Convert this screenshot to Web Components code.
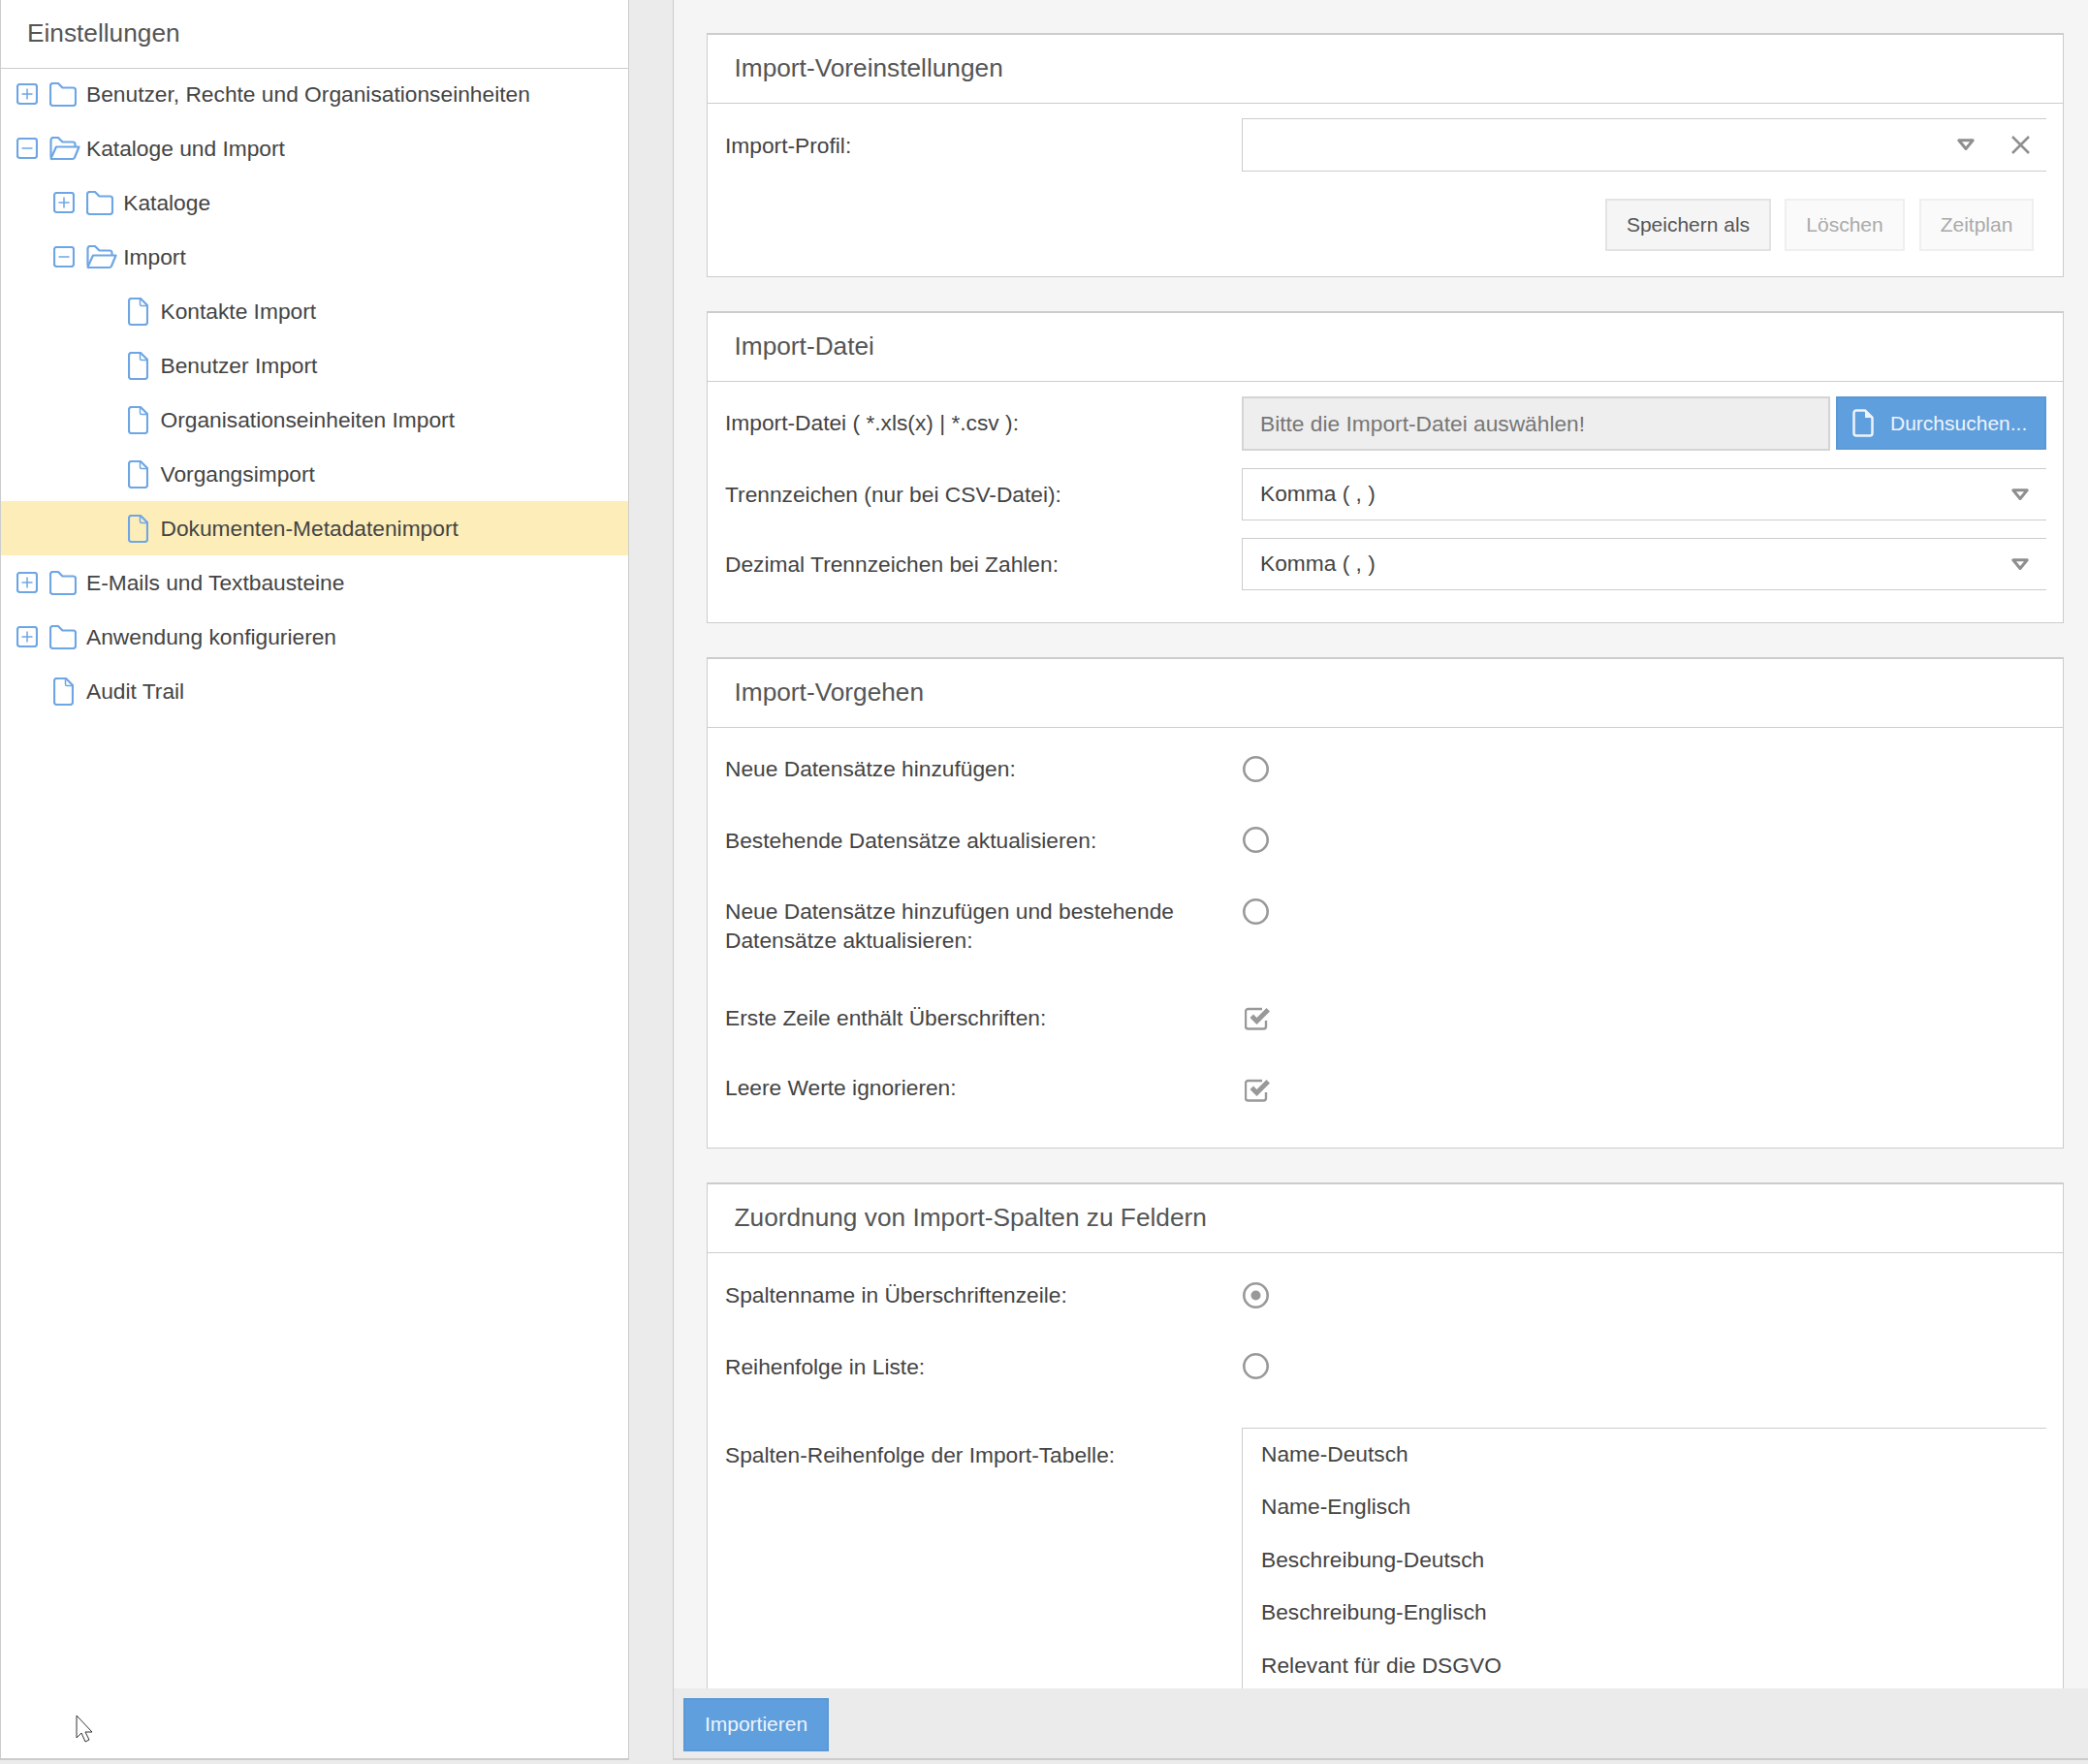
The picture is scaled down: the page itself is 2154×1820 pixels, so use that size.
<!DOCTYPE html>
<html lang="de">
<head>
<meta charset="utf-8">
<title>Einstellungen</title>
<style>
  html, body { margin: 0; height: 100%; }
  body { background: #ebebeb; font: 22.75px/30px "Liberation Sans", Arial, sans-serif; color: #444; overflow: hidden; }
</style>
</head>
<body>

<template id="tree-item-tpl">
  <style>
    :host { display: flex; align-items: center; height: 56px; box-sizing: border-box; padding-left: calc(15.5px + var(--level, 0) * 38.25px); color: #444; }
    :host([selected]) { background: #fdeeb9; }
    .twisty { width: 24px; height: 22px; flex: none; }
    .icon { width: 48.5px; flex: none; display: flex; }
    .text { padding-bottom: 1px; }
    svg { display: block; fill: none; stroke: #6ea6e4; stroke-width: 2.2; stroke-linejoin: round; }
    .folder { margin-left: 10px; }
    .file { margin-left: 14.5px; }
  </style>
  <span class="twisty"></span>
  <span class="icon"></span>
  <span class="text"><slot></slot></span>
</template>

<template id="form-panel-tpl">
  <style>
    :host { display: block; background: #fff; border: 1px solid #ccc; border-top-width: 2px; }
    h2 { margin: 0; height: 71px; box-sizing: border-box; border-bottom: 1px solid #ccc; padding-left: 27.5px; font: 400 26.25px/69px "Liberation Sans", Arial, sans-serif; color: #555; }
    .body { display: flex; flex-direction: column; gap: var(--row-gap, 18px); padding: var(--pad, 15px 17px 33px 18px); }
  </style>
  <h2></h2>
  <div class="body"><slot></slot></div>
</template>

<template id="form-row-tpl">
  <style>
    :host { display: flex; align-items: flex-start; }
    .label { width: 533px; flex: none; padding-top: var(--label-top, 12px); box-sizing: border-box; color: #444; }
    .ctl { flex: 1; min-width: 0; min-height: 54px; display: flex; align-items: center; gap: 6px; }
  </style>
  <div class="label"></div>
  <div class="ctl"><slot></slot></div>
</template>

<template id="select-box-tpl">
  <style>
    :host { display: flex; align-items: center; flex: 1; height: 54px; box-sizing: border-box; border: 1px solid #ccc; border-right: 0; padding: 0 18px; color: #444; }
    .val { flex: 1; padding-bottom: 2px; }
    .icons { display: flex; align-items: center; gap: 38px; }
    svg { display: block; flex: none; }
  </style>
  <span class="val"><slot></slot></span>
  <span class="icons"></span>
</template>

<template id="radio-mark-tpl">
  <style>
    :host { display: block; width: 27px; height: 27px; margin-left: 1px; }
    svg { display: block; }
  </style>
  <svg width="27" height="27" viewBox="0 0 27 27"><circle cx="13.5" cy="13.5" r="12.2" fill="#fff" stroke="#999" stroke-width="2.6"/></svg>
</template>

<template id="check-mark-tpl">
  <style>
    :host { display: block; width: 27px; height: 24px; margin-left: 3px; margin-top: 3px; }
    svg { display: block; }
  </style>
  <svg width="27" height="24" viewBox="0 0 27 24">
    <path d="M22 14v6a2.500 2.500 0 0 1-2.500 2.500H3.500A2.500 2.500 0 0 1 1 20V4.500A2.500 2.500 0 0 1 3.500 2H18" fill="none" stroke="#999" stroke-width="2.400"/>
    <path d="M5.500 11l3.500-3.500 3.500 3.500L22.500 1 26 4.500 12.500 18z" fill="#999"/>
  </svg>
</template>

<template id="action-button-tpl">
  <style>
    :host { display: inline-flex; align-items: center; justify-content: center; height: 54px; box-sizing: border-box; border: 2px solid #e3e3e3; background: #f5f5f5; color: #555; font-size: 21px; }
    :host([disabled]) { background: #fafafa; border-color: #efefef; color: #aaa; }
    :host([primary]) { background: #5f9fdd; border-color: #5a99d6; color: #eef4fb; }
  </style>
  <slot></slot>
</template>

<template id="settings-sidebar-tpl">
  <style>
    :host { display: flex; flex-direction: column; width: 649px; flex: none; height: 1816px; box-sizing: border-box; background: #fff; border: 1px solid #ccc; border-width: 0 1px 2px 1px; }
    h1 { margin: 0; height: 71px; box-sizing: border-box; flex: none; border-bottom: 1px solid #ccc; padding-left: 27px; font: 400 26.25px/68px "Liberation Sans", Arial, sans-serif; color: #555; }
    .tree { margin-top: -2px; }
  </style>
  <h1>Einstellungen</h1>
  <div class="tree"><slot></slot></div>
</template>

<template id="import-view-tpl">
  <style>
    :host { display: flex; flex-direction: column; flex: 1; min-width: 0; height: 1816px; margin-left: 45px; box-sizing: border-box; background: #f5f5f5; border: 1px solid #ccc; border-width: 0 0 2px 1px; }
    .scroll { flex: 1; min-height: 0; overflow: hidden; display: flex; flex-direction: column; gap: 35px; padding: 34px 25px 0 34px; }
    .bar { flex: none; height: 72px; background: #ebebeb; display: flex; align-items: center; padding-left: 10px; }
  </style>
  <div class="scroll"><slot></slot></div>
  <div class="bar"><slot name="actions"></slot></div>
</template>

<template id="value-list-tpl">
  <style>
    :host { display: block; flex: 1; box-sizing: border-box; border: 1px solid #ccc; border-width: 1px 0 0 1px; padding-left: 19px; min-height: 300px; }
    ::slotted(div) { height: 54.400px; line-height: 53px; color: #444; }
  </style>
  <slot></slot>
</template>

<template id="app-shell-tpl">
  <style>
    :host { display: flex; position: relative; width: 2154px; height: 1820px; overflow: hidden; }
    .cursor { position: absolute; left: 78px; top: 1769px; }
  </style>
  <slot></slot>
  <svg class="cursor" width="19" height="29" viewBox="0 0 19 29"><path d="M1 1v23l5-5 4 9 4-2-4-8h7z" fill="#fff" stroke="#333" stroke-width="1"/></svg>
</template>

<script>
const ICONS = {
  plus: '<svg width="22" height="22" viewBox="0 0 22 22"><rect x="1" y="1" width="20" height="20" rx="2.500"/><path d="M11 5.500v11M5.500 11h11" stroke-width="1.500"/></svg>',
  minus: '<svg width="22" height="22" viewBox="0 0 22 22"><rect x="1" y="1" width="20" height="20" rx="2.500"/><path d="M5.500 11h11" stroke-width="1.500"/></svg>',
  folder: '<svg class="folder" width="28" height="25" viewBox="0 0 28 25"><path d="M1 3.500a2.500 2.500 0 0 1 2.500-2.500h5.500l4.500 4.500H24.500a2.500 2.500 0 0 1 2.500 2.500v13.500a2.500 2.500 0 0 1-2.500 2.500H3.500a2.500 2.500 0 0 1-2.500-2.500z"/></svg>',
  open: '<svg class="folder" width="32" height="25" viewBox="0 0 32 25"><path d="M1.500 21V3.500A2.500 2.500 0 0 1 4 1h5l4.500 4.500H24a2.500 2.500 0 0 1 2.500 2.500v2"/><path d="M1.500 22.500L7 10.500h23.500L26 21.500a2.500 2.500 0 0 1-2.300 1.500H3a1.500 1.500 0 0 1-1.500-.5z"/></svg>',
  file: '<svg class="file" width="21" height="29" viewBox="0 0 21 29"><path d="M1 3.500A2.500 2.500 0 0 1 3.500 1H13l7 7v17.500a2.500 2.500 0 0 1-2.500 2.500h-14.500A2.500 2.500 0 0 1 1 25.500z"/><path d="M12.500 1v6a1.500 1.500 0 0 0 1.500 1.500h6" stroke-width="1.500"/></svg>'
};

const ARROW = '<svg width="18" height="13" viewBox="0 0 18 13"><path d="M1.800 1.800h14.400L9 10.500z" fill="#fff" stroke="#8f8f8f" stroke-width="3" stroke-linejoin="round"/></svg>';
const CLEAR = '<svg width="19" height="19" viewBox="0 0 19 19"><path d="M1 1l17 17M18 1L1 18" fill="none" stroke="#8f8f8f" stroke-width="2.500"/></svg>';

// the page parses after the define calls, so attributes are only read once connected
class BaseElement extends HTMLElement {
  constructor(tplId) {
    super();
    this.attachShadow({ mode: 'open' });
    this.shadowRoot.appendChild(document.getElementById(tplId).content.cloneNode(true));
  }
}

class TreeItem extends BaseElement {
  constructor() { super('tree-item-tpl'); }
  connectedCallback() {
    this.style.setProperty('--level', this.getAttribute('level') || 0);
    const toggle = this.getAttribute('toggle');
    if (toggle) this.shadowRoot.querySelector('.twisty').innerHTML = ICONS[toggle];
    this.shadowRoot.querySelector('.icon').innerHTML = ICONS[this.getAttribute('icon') || 'file'];
  }
}

class FormPanel extends BaseElement {
  constructor() { super('form-panel-tpl'); }
  connectedCallback() {
    this.shadowRoot.querySelector('h2').textContent = this.getAttribute('heading');
  }
}

class FormRow extends BaseElement {
  constructor() { super('form-row-tpl'); }
  connectedCallback() {
    this.shadowRoot.querySelector('.label').textContent = this.getAttribute('label');
  }
}

class SelectBox extends BaseElement {
  constructor() { super('select-box-tpl'); }
  connectedCallback() {
    this.shadowRoot.querySelector('.icons').innerHTML = this.hasAttribute('clearable') ? ARROW + CLEAR : ARROW;
  }
}

class RadioMark extends BaseElement {
  constructor() { super('radio-mark-tpl'); }
  connectedCallback() {
    if (this.hasAttribute('checked')) {
      this.shadowRoot.querySelector('svg').insertAdjacentHTML('beforeend', '<circle cx="13.500" cy="13.500" r="5" fill="#999"/>');
    }
  }
}

class CheckMark extends BaseElement { constructor() { super('check-mark-tpl'); } }
class ActionButton extends BaseElement { constructor() { super('action-button-tpl'); } }
class SettingsSidebar extends BaseElement { constructor() { super('settings-sidebar-tpl'); } }
class ImportView extends BaseElement { constructor() { super('import-view-tpl'); } }
class ValueList extends BaseElement { constructor() { super('value-list-tpl'); } }
class AppShell extends BaseElement { constructor() { super('app-shell-tpl'); } }

customElements.define('tree-item', TreeItem);
customElements.define('form-panel', FormPanel);
customElements.define('form-row', FormRow);
customElements.define('select-box', SelectBox);
customElements.define('radio-mark', RadioMark);
customElements.define('check-mark', CheckMark);
customElements.define('action-button', ActionButton);
customElements.define('settings-sidebar', SettingsSidebar);
customElements.define('import-view', ImportView);
customElements.define('value-list', ValueList);
customElements.define('app-shell', AppShell);
</script>

<app-shell>
  <settings-sidebar>
    <tree-item toggle="plus" icon="folder">Benutzer, Rechte und Organisationseinheiten</tree-item>
    <tree-item toggle="minus" icon="open">Kataloge und Import</tree-item>
    <tree-item level="1" toggle="plus" icon="folder">Kataloge</tree-item>
    <tree-item level="1" toggle="minus" icon="open">Import</tree-item>
    <tree-item level="2">Kontakte Import</tree-item>
    <tree-item level="2">Benutzer Import</tree-item>
    <tree-item level="2">Organisationseinheiten Import</tree-item>
    <tree-item level="2">Vorgangsimport</tree-item>
    <tree-item level="2" selected>Dokumenten-Metadatenimport</tree-item>
    <tree-item toggle="plus" icon="folder">E-Mails und Textbausteine</tree-item>
    <tree-item toggle="plus" icon="folder">Anwendung konfigurieren</tree-item>
    <tree-item>Audit Trail</tree-item>
  </settings-sidebar>

  <import-view>
    <form-panel heading="Import-Voreinstellungen" style="--pad:15px 17px 26px 18px;--row-gap:28px">
      <form-row label="Import-Profil:" style="--label-top:13px"><select-box clearable style="height:55px;padding-right:17px"></select-box></form-row>
      <div style="display:flex;justify-content:flex-end;gap:14px;padding-right:13px">
        <action-button style="width:171px">Speichern als</action-button>
        <action-button disabled style="width:124px">Löschen</action-button>
        <action-button disabled style="width:118px;margin-left:1px">Zeitplan</action-button>
      </div>
    </form-panel>

    <form-panel heading="Import-Datei">
      <form-row label="Import-Datei ( *.xls(x) | *.csv ):">
        <div style="flex:1;height:56px;box-sizing:border-box;border:2px solid #d4d4d4;background:#eee;color:#777;padding:0 17px;line-height:52px">Bitte die Import-Datei auswählen!</div>
        <action-button primary style="width:217px;height:55px;gap:17px;align-self:flex-start;justify-content:flex-start;padding-left:15px">
          <svg width="22" height="29" viewBox="0 0 22 29" style="display:block"><path d="M1.500 4a2.500 2.500 0 0 1 2.500-2.500h9l7.500 7.500v16a2.500 2.500 0 0 1-2.500 2.500H4a2.500 2.500 0 0 1-2.500-2.500z" fill="none" stroke="#eef4fb" stroke-width="2.500" stroke-linejoin="round"/><path d="M13 1.500v7.500h7.500z" fill="#eef4fb"/></svg><span>Durchsuchen...</span>
        </action-button>
      </form-row>
      <form-row label="Trennzeichen (nur bei CSV-Datei):"><select-box>Komma ( , )</select-box></form-row>
      <form-row label="Dezimal Trennzeichen bei Zahlen:"><select-box>Komma ( , )</select-box></form-row>
    </form-panel>

    <form-panel heading="Import-Vorgehen" style="--row-gap:19.500px;--pad:15px 17px 35px 18px">
      <form-row label="Neue Datensätze hinzufügen:"><radio-mark></radio-mark></form-row>
      <form-row label="Bestehende Datensätze aktualisieren:"><radio-mark></radio-mark></form-row>
      <form-row label="Neue Datensätze hinzufügen und bestehende Datensätze aktualisieren:" style="height:90px"><radio-mark></radio-mark></form-row>
      <form-row label="Erste Zeile enthält Überschriften:"><check-mark></check-mark></form-row>
      <form-row label="Leere Werte ignorieren:" style="margin-top:-1px"><check-mark style="margin-top:5px"></check-mark></form-row>
    </form-panel>

    <form-panel heading="Zuordnung von Import-Spalten zu Feldern" style="--row-gap:19.500px;--pad:16px 17px 20px 18px;flex:none">
      <form-row label="Spaltenname in Überschriftenzeile:"><radio-mark checked></radio-mark></form-row>
      <form-row label="Reihenfolge in Liste:"><radio-mark></radio-mark></form-row>
      <form-row label="Spalten-Reihenfolge der Import-Tabelle:" style="margin-top:17px;--label-top:13px">
        <value-list>
          <div>Name-Deutsch</div>
          <div>Name-Englisch</div>
          <div>Beschreibung-Deutsch</div>
          <div>Beschreibung-Englisch</div>
          <div>Relevant für die DSGVO</div>
        </value-list>
      </form-row>
    </form-panel>

    <action-button slot="actions" primary style="width:150px;height:55px;margin-top:2px">Importieren</action-button>
  </import-view>
</app-shell>

</body>
</html>
